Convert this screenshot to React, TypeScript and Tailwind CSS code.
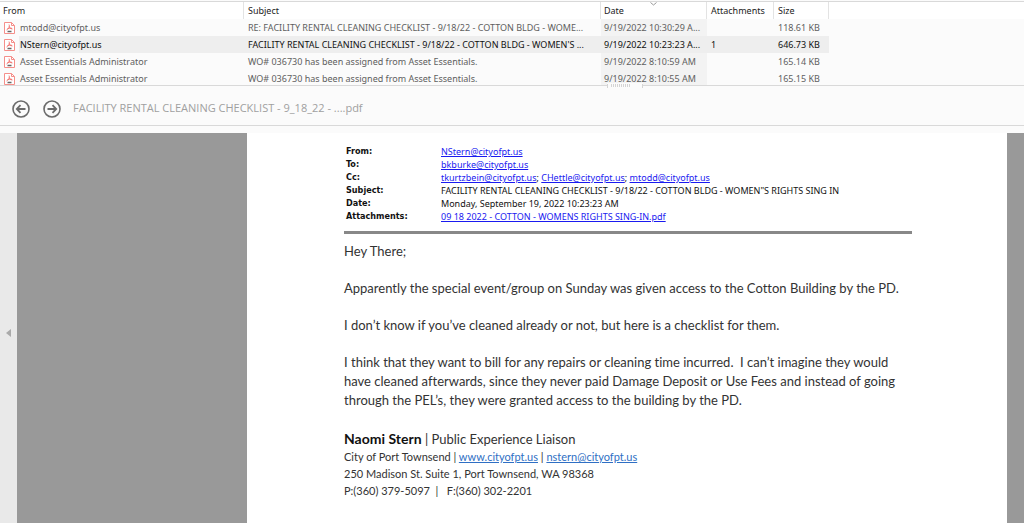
import { clsx } from 'clsx';

interface Message {
  id: number;
  from: string;
  subject: string;
  date: string;
  attachments?: number;
  size: string;
  selected?: boolean;
}

const messages: Message[] = [
  {
    id: 1,
    from: 'mtodd@cityofpt.us',
    subject: 'RE: FACILITY RENTAL CLEANING CHECKLIST - 9/18/22 - COTTON BLDG - WOME...',
    date: '9/19/2022 10:30:29 A...',
    size: '118.61 KB',
  },
  {
    id: 2,
    from: 'NStern@cityofpt.us',
    subject: "FACILITY RENTAL CLEANING CHECKLIST - 9/18/22 - COTTON BLDG - WOMEN'S ...",
    date: '9/19/2022 10:23:23 A...',
    attachments: 1,
    size: '646.73 KB',
    selected: true,
  },
  {
    id: 3,
    from: 'Asset Essentials Administrator',
    subject: 'WO# 036730 has been assigned from Asset Essentials.',
    date: '9/19/2022 8:10:59 AM',
    size: '165.14 KB',
  },
  {
    id: 4,
    from: 'Asset Essentials Administrator',
    subject: 'WO# 036730 has been assigned from Asset Essentials.',
    date: '9/19/2022 8:10:55 AM',
    size: '165.15 KB',
  },
];

function PdfIcon() {
  return (
    <svg className="h-3 w-[11px] shrink-0" viewBox="0 0 11 12" fill="none" aria-hidden="true">
      <path d="M.5.5h7l3 3v8H.5z" fill="#fff" stroke="#f58f8a" />
      <path d="M7.5.5v3h3" stroke="#f58f8a" />
      <path
        d="M5 2.5c1 2 .2 3.5-2.500 5.500M5.200 4.500c.6 1.600 1.600 2.300 3.300 2.500M3.500 6.800c1.500-.6 3-.8 4.500-.5"
        stroke="#f0605a"
        strokeWidth=".8"
      />
      <path d="M3.500 9.500h4" stroke="#666" strokeWidth="1.500" />
    </svg>
  );
}

function ArrowButton({ label, flip = false }: { label: string; flip?: boolean }) {
  return (
    <button type="button" aria-label={label} className="size-[18px]">
      <svg
        className={clsx('size-[18px]', flip && '-scale-x-100')}
        viewBox="0 0 18 18"
        fill="none"
        stroke="#6b6b6b"
        strokeWidth="1.600"
      >
        <circle cx="9" cy="9" r="8" />
        <path d="M13.500 9H5M8.500 5.200 4.800 9l3.700 3.800" strokeWidth="1.800" />
      </svg>
    </button>
  );
}

function MessageList() {
  const headCell = 'relative h-[17px] border-r border-[#e3e3e3] p-0 text-left font-normal';

  return (
    <div className="border-t border-[#d9d9d9]">
      <table className="w-full table-fixed border-separate border-spacing-0 font-['Noto_Sans',sans-serif] text-[9px] leading-[17px] whitespace-nowrap">
        <colgroup>
          <col className="w-[244px]" />
          <col className="w-[357px]" />
          <col className="w-[106px]" />
          <col className="w-[67px]" />
          <col className="w-[55px]" />
          <col />
        </colgroup>
        <thead className="bg-white text-[#222]">
          <tr>
            <th className={clsx(headCell, 'pl-[3px]')}>From</th>
            <th className={clsx(headCell, 'pl-1')}>Subject</th>
            <th className={clsx(headCell, 'pl-[3px]')} aria-sort="descending">
              Date
              <svg className="absolute top-0 left-[49px] h-1 w-[7px]" viewBox="0 0 7 4" fill="none" aria-hidden="true">
                <path d="M.5.5l3 2.500 3-2.500" stroke="#999" />
              </svg>
            </th>
            <th className={clsx(headCell, 'pl-1')}>Attachments</th>
            <th className={clsx(headCell, 'pl-1')}>Size</th>
            <td />
          </tr>
        </thead>
        <tbody>
          {messages.map((message) => {
            const cell = clsx('h-[17px] p-0', message.selected && 'bg-[#eeeeee]');
            return (
              <tr key={message.id} className={message.selected ? 'text-[#111]' : 'text-[#606060]'}>
                <td className="h-[17px] p-0 pl-1">
                  <div className="flex items-center gap-1">
                    <PdfIcon />
                    <span className={clsx('grow pl-px', message.selected && 'bg-[#eeeeee]')}>{message.from}</span>
                  </div>
                </td>
                <td className={clsx(cell, 'pl-1')}>{message.subject}</td>
                <td className={clsx('h-[17px] p-0 pl-[3px]', message.selected ? 'bg-[#eeeeee]' : 'bg-[#f3f3f3]')}>
                  {message.date}
                </td>
                <td className={clsx(cell, 'pl-1')}>{message.attachments}</td>
                <td className={clsx(cell, 'pl-1')}>{message.size}</td>
                <td />
              </tr>
            );
          })}
        </tbody>
      </table>
    </div>
  );
}

function Splitter() {
  return (
    <div className="relative z-10 -mt-[5px] h-1 border-b border-[#d9d9d9]">
      <div className="absolute -bottom-[3px] left-[607px] flex h-[5px] w-9 items-center justify-between bg-[#fbfbfb]">
        <span className="h-1 w-px bg-[#d4d4d4]" />
        <span className="mr-2 h-[3px] w-5 bg-[repeating-linear-gradient(90deg,#d4d4d4_0_1px,#fbfbfb_1px_2px)]" />
        <span className="h-1 w-px bg-[#d4d4d4]" />
      </div>
    </div>
  );
}

function MailLink({ address }: { address: string }) {
  return (
    <a href={`mailto:${address}`} className="text-[#1a1af0] underline">
      {address}
    </a>
  );
}

function EmailHeaders() {
  const rows: { label: string; value: React.ReactNode }[] = [
    { label: 'From:', value: <MailLink address="NStern@cityofpt.us" /> },
    { label: 'To:', value: <MailLink address="bkburke@cityofpt.us" /> },
    {
      label: 'Cc:',
      value: (
        <>
          <MailLink address="tkurtzbein@cityofpt.us" />; <MailLink address="CHettle@cityofpt.us" />;{' '}
          <MailLink address="mtodd@cityofpt.us" />
        </>
      ),
    },
    { label: 'Subject:', value: 'FACILITY RENTAL CLEANING CHECKLIST - 9/18/22 - COTTON BLDG - WOMEN"S RIGHTS SING IN' },
    { label: 'Date:', value: 'Monday, September 19, 2022 10:23:23 AM' },
    {
      label: 'Attachments:',
      value: (
        <a href="#attachment" className="text-[#1a1af0] underline">
          09 18 2022 - COTTON - WOMENS RIGHTS SING-IN.pdf
        </a>
      ),
    },
  ];

  return (
    <dl className="grid grid-cols-[95px_1fr] pl-0.5 text-[9px] leading-[13px] whitespace-nowrap text-[#111]">
      {rows.map((row) => (
        <div key={row.label} className="contents">
          <dt className="font-['DejaVu_Sans_Condensed','DejaVu_Sans',sans-serif] font-bold">{row.label}</dt>
          <dd className="font-['Noto_Sans',sans-serif]">{row.value}</dd>
        </div>
      ))}
    </dl>
  );
}

function EmailBody() {
  return (
    <div className="font-[Lato,sans-serif] whitespace-nowrap text-[#333] [font-variant-ligatures:none]">
      <div className="space-y-[18px] text-[13px] leading-[19px]">
        <p>Hey There;</p>
        <p>Apparently the special event/group on Sunday was given access to the Cotton Building by the PD.</p>
        <p>I don’t know if you’ve cleaned already or not, but here is a checklist for them.</p>
        <p>
          I think that they want to bill for any repairs or cleaning time incurred.&nbsp; I can’t imagine they would
          <br />
          have cleaned afterwards, since they never paid Damage Deposit or Use Fees and instead of going
          <br />
          through the PEL’s, they were granted access to the building by the PD.
        </p>
      </div>
      <div className="mt-5 text-[11px] leading-[17px]">
        <p className="text-[13px] leading-[18px]">
          <strong className="text-sm leading-none text-[#111]">Naomi Stern</strong> | Public Experience Liaison
        </p>
        <p>
          City of Port Townsend |{' '}
          <a href="#website" className="text-[#2f6fc4] underline">
            www.cityofpt.us
          </a>{' '}
          |{' '}
          <a href="mailto:nstern@cityofpt.us" className="text-[#2f6fc4] underline">
            nstern@cityofpt.us
          </a>
        </p>
        <p>250 Madison St. Suite 1, Port Townsend, WA 98368</p>
        <p>P:(360) 379-5097&nbsp; |&nbsp;&nbsp; F:(360) 302-2201</p>
      </div>
    </div>
  );
}

export default function App() {
  return (
    <div className="flex min-h-screen flex-col bg-[#fbfbfb] pt-px font-['Open_Sans',sans-serif]">
      <MessageList />
      <Splitter />
      <header className="relative flex h-10 items-center border-b border-[#d9d9d9] bg-[#fbfbfb] px-3 pt-1.5">
        <div className="flex gap-[13px]">
          <ArrowButton label="Previous" />
          <ArrowButton label="Next" flip />
        </div>
        <h1 className="ml-3 text-[11px] text-[#a0a0a0]">FACILITY RENTAL CLEANING CHECKLIST - 9_18_22 - ....pdf</h1>
      </header>
      <main className="mt-[7px] grid grow grid-cols-[17px_230fr_760fr_17px] bg-[#999]">
        <button type="button" aria-label="Expand panel" className="flex items-center justify-center bg-[#e9e9e9] pt-2.5">
          <svg className="h-2 w-[5px]" viewBox="0 0 5 8" aria-hidden="true">
            <path d="M5 0v8L0 4z" fill="#aaa" />
          </svg>
        </button>
        <article className="col-start-3 bg-white pt-3 pr-[95px] pl-[97px]">
          <EmailHeaders />
          <hr className="my-2 border-t-[3px] border-[#888]" />
          <EmailBody />
        </article>
      </main>
    </div>
  );
}
